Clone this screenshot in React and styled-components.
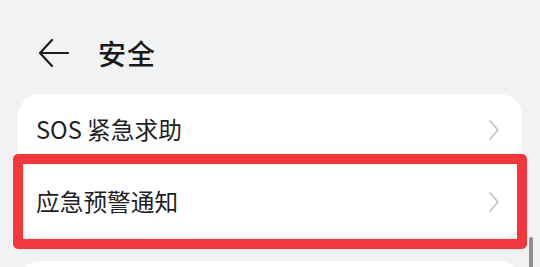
import styled, { createGlobalStyle } from "styled-components";

const GlobalStyle = createGlobalStyle`
  html, body {
    margin: 0;
    padding: 0;
    background: #f1f2f4;
    font-family: "Noto Sans CJK SC", "Noto Sans", sans-serif;
    overflow: hidden;
  }
`;

const Page = styled.div`
  position: relative;
  width: 540px;
  height: 267px;
  overflow: hidden;
  background: #f1f2f4;
`;

const Header = styled.div`
  display: flex;
  align-items: center;
  height: 94px;
  padding: 12px 0 0 39px;
  box-sizing: border-box;
  gap: 29px;
`;

const BackIcon = styled.svg`
  width: 30px;
  height: 28px;
  flex-shrink: 0;
`;

const Title = styled.h1`
  margin: 0;
  font-size: 28px;
  font-weight: 500;
  color: #1a1a1a;
  letter-spacing: 1px;
`;

const Card = styled.div`
  margin: 0 18px;
  background: #fff;
  border-radius: 22px;
`;

const NextCard = styled(Card)`
  margin-top: 23px;
  height: 60px;
`;

const Row = styled.div`
  position: relative;
  display: flex;
  align-items: center;
  justify-content: space-between;
  height: 72px;
  padding: 0 22px 0 18px;
  box-sizing: border-box;
`;

const Label = styled.span`
  font-size: 23.7px;
  color: #1f1f1f;
  line-height: 1;
`;

const Chevron = styled.svg`
  width: 12px;
  height: 22px;
`;

const Highlight = styled.div`
  position: absolute;
  top: -12px;
  bottom: -11px;
  left: -5px;
  right: -5px;
  border: 10px solid #f5373b;
  border-radius: 5px;
  pointer-events: none;
`;

const ScrollThumb = styled.div`
  position: absolute;
  left: 529px;
  top: 237px;
  width: 4px;
  height: 40px;
  border-radius: 2px;
  background: #8f8f8f;
`;

const Arrow = () => (
  <Chevron viewBox="0 0 12 22">
    <path d="M2 2 L10 11 L2 20" fill="none" stroke="#c6c6c6" strokeWidth="1.8" strokeLinecap="round" strokeLinejoin="round" />
  </Chevron>
);

export default function App() {
  return (
    <Page>
      <GlobalStyle />
      <Header>
        <BackIcon viewBox="0 0 30 28">
          <path d="M13 1 L1 14 L13 27 M1 14 H29" fill="none" stroke="#1f1f1f" strokeWidth="2.2" strokeLinecap="round" strokeLinejoin="round" />
        </BackIcon>
        <Title>安全</Title>
      </Header>
      <Card>
        <Row>
          <Label>SOS 紧急求助</Label>
          <Arrow />
        </Row>
        <Row>
          <Label>应急预警通知</Label>
          <Arrow />
          <Highlight />
        </Row>
      </Card>
      <NextCard />
      <ScrollThumb />
    </Page>
  );
}
